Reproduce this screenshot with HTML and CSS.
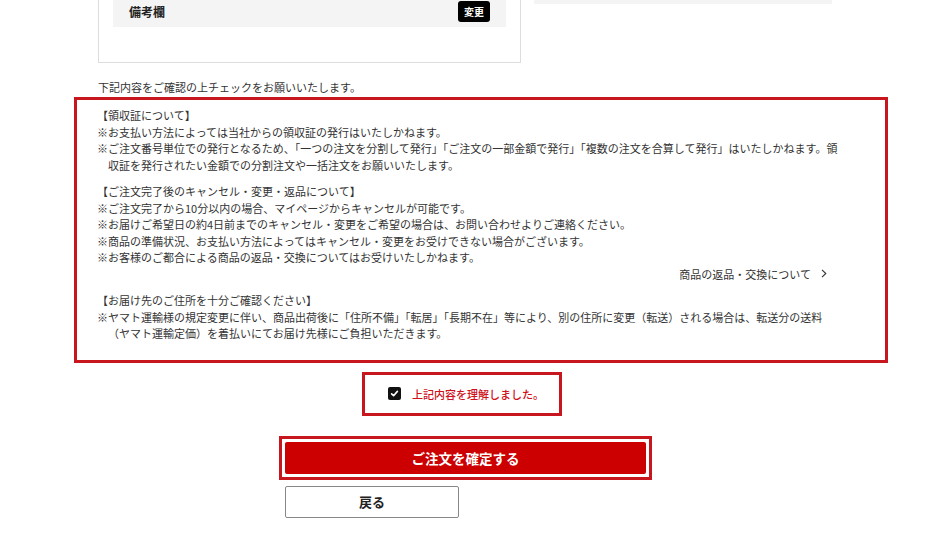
FILE: index.html
```html
<!DOCTYPE html>
<html lang="ja">
<head>
<meta charset="utf-8">
<title>ご注文内容の確認</title>
<link rel="stylesheet" href="styles.css">
</head>
<body>
<div class="page">
  <div class="top">
    <div class="card">
      <div class="card-row">
        <span class="row-label">備考欄</span>
        <button class="btn-change" type="button">変更</button>
      </div>
    </div>
    <div class="side">
      <div class="side-block"></div>
    </div>
  </div>

  <p class="intro">下記内容をご確認の上チェックをお願いいたします。</p>

  <div class="notice">
    <div class="section">
      <p class="head">【領収証について】</p>
      <p class="item">※お支払い方法によっては当社からの領収証の発行はいたしかねます。</p>
      <p class="item">※ご注文番号単位での発行となるため、「一つの注文を分割して発行」「ご注文の一部金額で発行」「複数の注文を合算して発行」はいたしかねます。領収証を発行されたい金額での分割注文や一括注文をお願いいたします。</p>
    </div>
    <div class="section">
      <p class="head">【ご注文完了後のキャンセル・変更・返品について】</p>
      <p class="item">※ご注文完了から10分以内の場合、マイページからキャンセルが可能です。</p>
      <p class="item">※お届けご希望日の約4日前までのキャンセル・変更をご希望の場合は、お問い合わせよりご連絡ください。</p>
      <p class="item">※商品の準備状況、お支払い方法によってはキャンセル・変更をお受けできない場合がございます。</p>
      <p class="item">※お客様のご都合による商品の返品・交換についてはお受けいたしかねます。</p>
      <p class="link-line"><a class="link" href="#">商品の返品・交換について<svg class="chev" width="6" height="9" viewBox="0 0 6 9"><polyline points="1,0.8 4.8,4.5 1,8.2" fill="none" stroke="#333" stroke-width="1.1"/></svg></a></p>
    </div>
    <div class="section last">
      <p class="head">【お届け先のご住所を十分ご確認ください】</p>
      <p class="item">※ヤマト運輸様の規定変更に伴い、商品出荷後に「住所不備」「転居」「長期不在」等により、別の住所に変更（転送）される場合は、転送分の送料（ヤマト運輸定価）を着払いにてお届け先様にご負担いただきます。</p>
    </div>
  </div>

  <label class="agree">
    <svg class="check" width="13" height="13" viewBox="0 0 13 13"><rect x="0" y="0" width="13" height="13" rx="2" fill="#111"/><polyline points="3.6,6.8 5.6,8.7 9.4,4.4" fill="none" stroke="#fff" stroke-width="1.6" stroke-linecap="round" stroke-linejoin="round"/></svg>
    <span class="agree-text">上記内容を理解しました。</span>
  </label>

  <div class="confirm-wrap">
    <button class="btn-confirm" type="button">ご注文を確定する</button>
  </div>
  <button class="btn-back" type="button">戻る</button>
</div>
</body>
</html>
```

FILE: styles.css
```css
* { box-sizing: border-box; }

html, body {
  margin: 0;
  padding: 0;
  background: #fff;
}

body {
  font-family: "Noto Sans CJK JP", "Noto Sans", sans-serif;
  color: #333;
  overflow: hidden;
}

p { margin: 0; }

.page {
  width: 734px;
  margin: -20px 0 0 98px;
}

.top {
  display: flex;
  gap: 13px;
  align-items: flex-start;
}

.card {
  width: 423px;
  border: 1px solid #ddd;
  padding: 15px 14px 35px;
}

.card-row {
  background: #f4f4f4;
  display: flex;
  justify-content: space-between;
  align-items: center;
  padding: 5px 16px;
}

.row-label {
  font-size: 12px;
  font-weight: bold;
  color: #222;
}

.btn-change {
  font-family: inherit;
  background: #000;
  color: #fff;
  border: 0;
  border-radius: 3px;
  font-size: 10px;
  font-weight: bold;
  width: 32px;
  height: 21px;
  padding: 0;
  line-height: 21px;
}

.side {
  width: 298px;
}

.side-block {
  height: 24px;
  background: #f4f4f4;
}

.intro {
  margin-top: 16px;
  font-size: 11px;
  line-height: 16px;
}

.notice {
  margin: 2px 0 0 -24px;
  width: 814px;
  border: 3px solid #c8161e;
  padding: 7px 47px 18px 20px;
  font-size: 11px;
  line-height: 16.5px;
}

.section { margin-bottom: 10px; }
.section.last { margin-bottom: 0; }

.item {
  padding-left: 1em;
  text-indent: -1em;
}

.link-line {
  text-align: right;
  padding-right: 11px;
}

.link {
  color: #333;
  text-decoration: none;
  display: inline-flex;
  align-items: center;
  gap: 10px;
}

.agree {
  margin: 9px 0 0 264px;
  width: 200px;
  height: 44px;
  border: 3px solid #c8161e;
  display: flex;
  align-items: center;
  padding-left: 23px;
  gap: 11px;
}

.check { display: block; }

.agree-text {
  color: #d0101b;
  font-size: 11px;
  font-weight: 500;
}

.confirm-wrap {
  margin: 20px 0 0 181px;
  width: 373px;
  border: 3px solid #c8161e;
  padding: 3px;
}

.btn-confirm {
  display: block;
  width: 100%;
  height: 32px;
  background: #cc0000;
  color: #fff;
  border: 0;
  border-radius: 2px;
  font-family: inherit;
  font-size: 13.5px;
  font-weight: bold;
  padding: 0;
}

.btn-back {
  display: block;
  margin: 6px 0 0 187px;
  width: 174px;
  height: 32px;
  background: #fff;
  color: #222;
  border: 1px solid #888;
  border-radius: 2px;
  font-family: inherit;
  font-size: 13px;
  font-weight: bold;
  padding: 0;
}
```
